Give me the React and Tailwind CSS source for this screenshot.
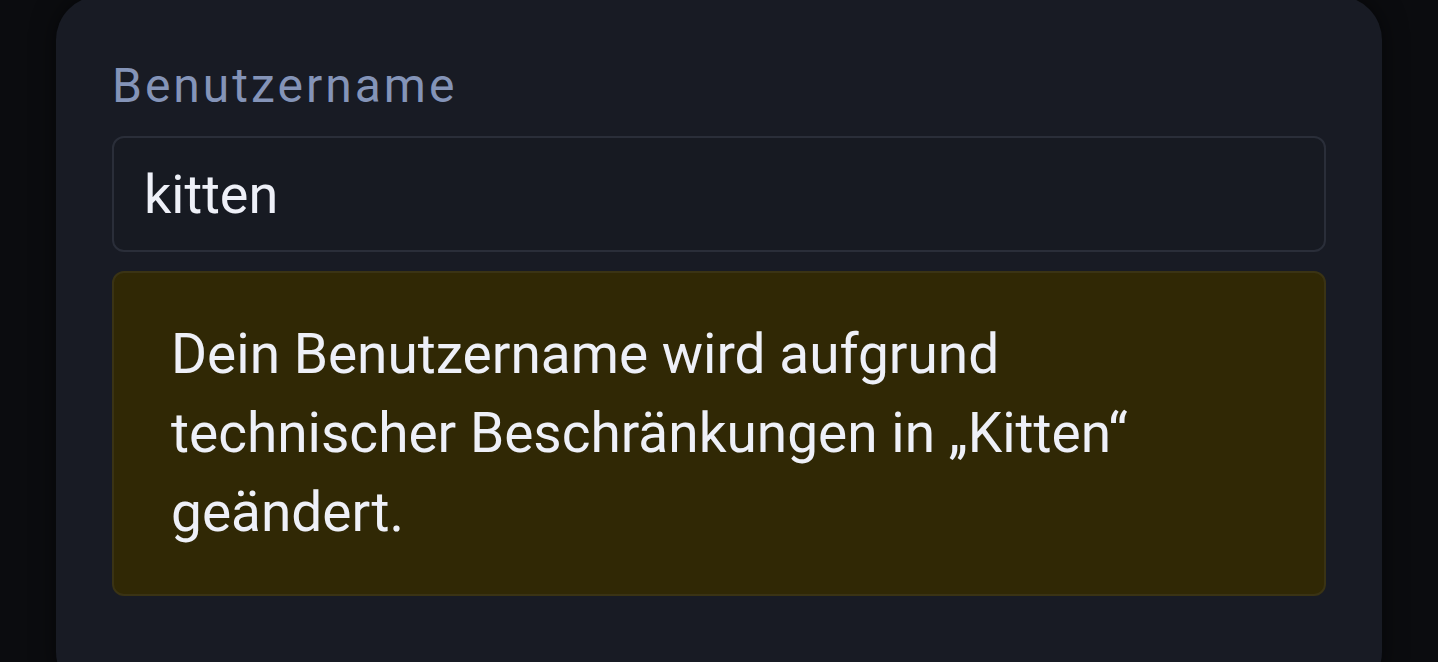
export default function App() {
  return (
    <div className="w-[1438px] h-[662px] overflow-hidden bg-[#0b0c0f] px-[56px]" style={{ fontFamily: 'Roboto, "Noto Sans", sans-serif' }}>
      <div className="h-[700px] -mt-[4px] rounded-[44px] bg-[#181b24] px-[56px] pt-[66px] shadow-[0_0_24px_rgba(0,0,0,0.5)]">
        <div className="text-[48px] leading-[48px] tracking-[3px] text-[#8494b8]">Benutzername</div>
        <div className="mt-[26px] h-[116px] rounded-[12px] border-2 border-[#2a2e39] bg-[#171a22] flex items-center px-[30px]">
          <span className="text-[54px] text-[#eef0f8]">kitten</span>
        </div>
        <div className="mt-[19px] h-[325px] rounded-[12px] border-2 border-[#3a3314] bg-[#302805] pl-[57px] pr-[40px] pt-[42px]">
          <p className="text-[55px] leading-[79px] text-[#eef0f8] max-w-[1040px]">
            Dein Benutzername wird aufgrund technischer Beschränkungen in „Kitten“ geändert.
          </p>
        </div>
      </div>
    </div>
  );
}
